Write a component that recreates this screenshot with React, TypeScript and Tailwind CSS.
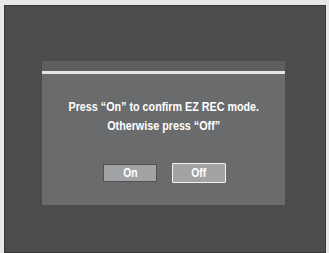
import React from "react";

const App = () => {
  return (
    <div className="w-[329px] h-[253px] bg-[#e8e8e8] pt-[5px] pl-[4px] pr-[3px] overflow-hidden">
      <div
        className="h-[248px] bg-[#4b4c4e] border border-[#38393a] pt-[55px] pl-[37px]"
        style={{ fontFamily: '"Liberation Sans", Arial, sans-serif' }}
      >
        <div className="w-[243px] h-[144px] bg-[#6a6b6d] flex flex-col">
          <div className="h-[10px] bg-[#5d5e60]" />
          <div className="h-[3px] bg-[#e6e6e6]" />
          <div className="flex flex-col items-center pt-[24px] text-white font-bold text-[12.5px] leading-[19px]">
            <p className="scale-x-[0.86] whitespace-nowrap">Press “On” to confirm EZ REC mode.</p>
            <p className="scale-x-[0.86] whitespace-nowrap">Otherwise press “Off”</p>
          </div>
          <div className="flex justify-center items-center gap-[15px] mt-[27px] ml-[2px]">
            <div className="w-[54px] h-[18px] bg-[#a2a3a5] border border-[#505153] flex items-center justify-center text-white font-bold text-[12px]">
              <span className="scale-x-[0.86]">On</span>
            </div>
            <div className="w-[54px] h-[20px] bg-[#a2a3a5] border-[1.5px] border-[#f2f2f2] rounded-[1px] flex items-center justify-center text-white font-bold text-[12px]">
              <span className="scale-x-[0.86]">Off</span>
            </div>
          </div>
        </div>
      </div>
    </div>
  );
};

export default App;
